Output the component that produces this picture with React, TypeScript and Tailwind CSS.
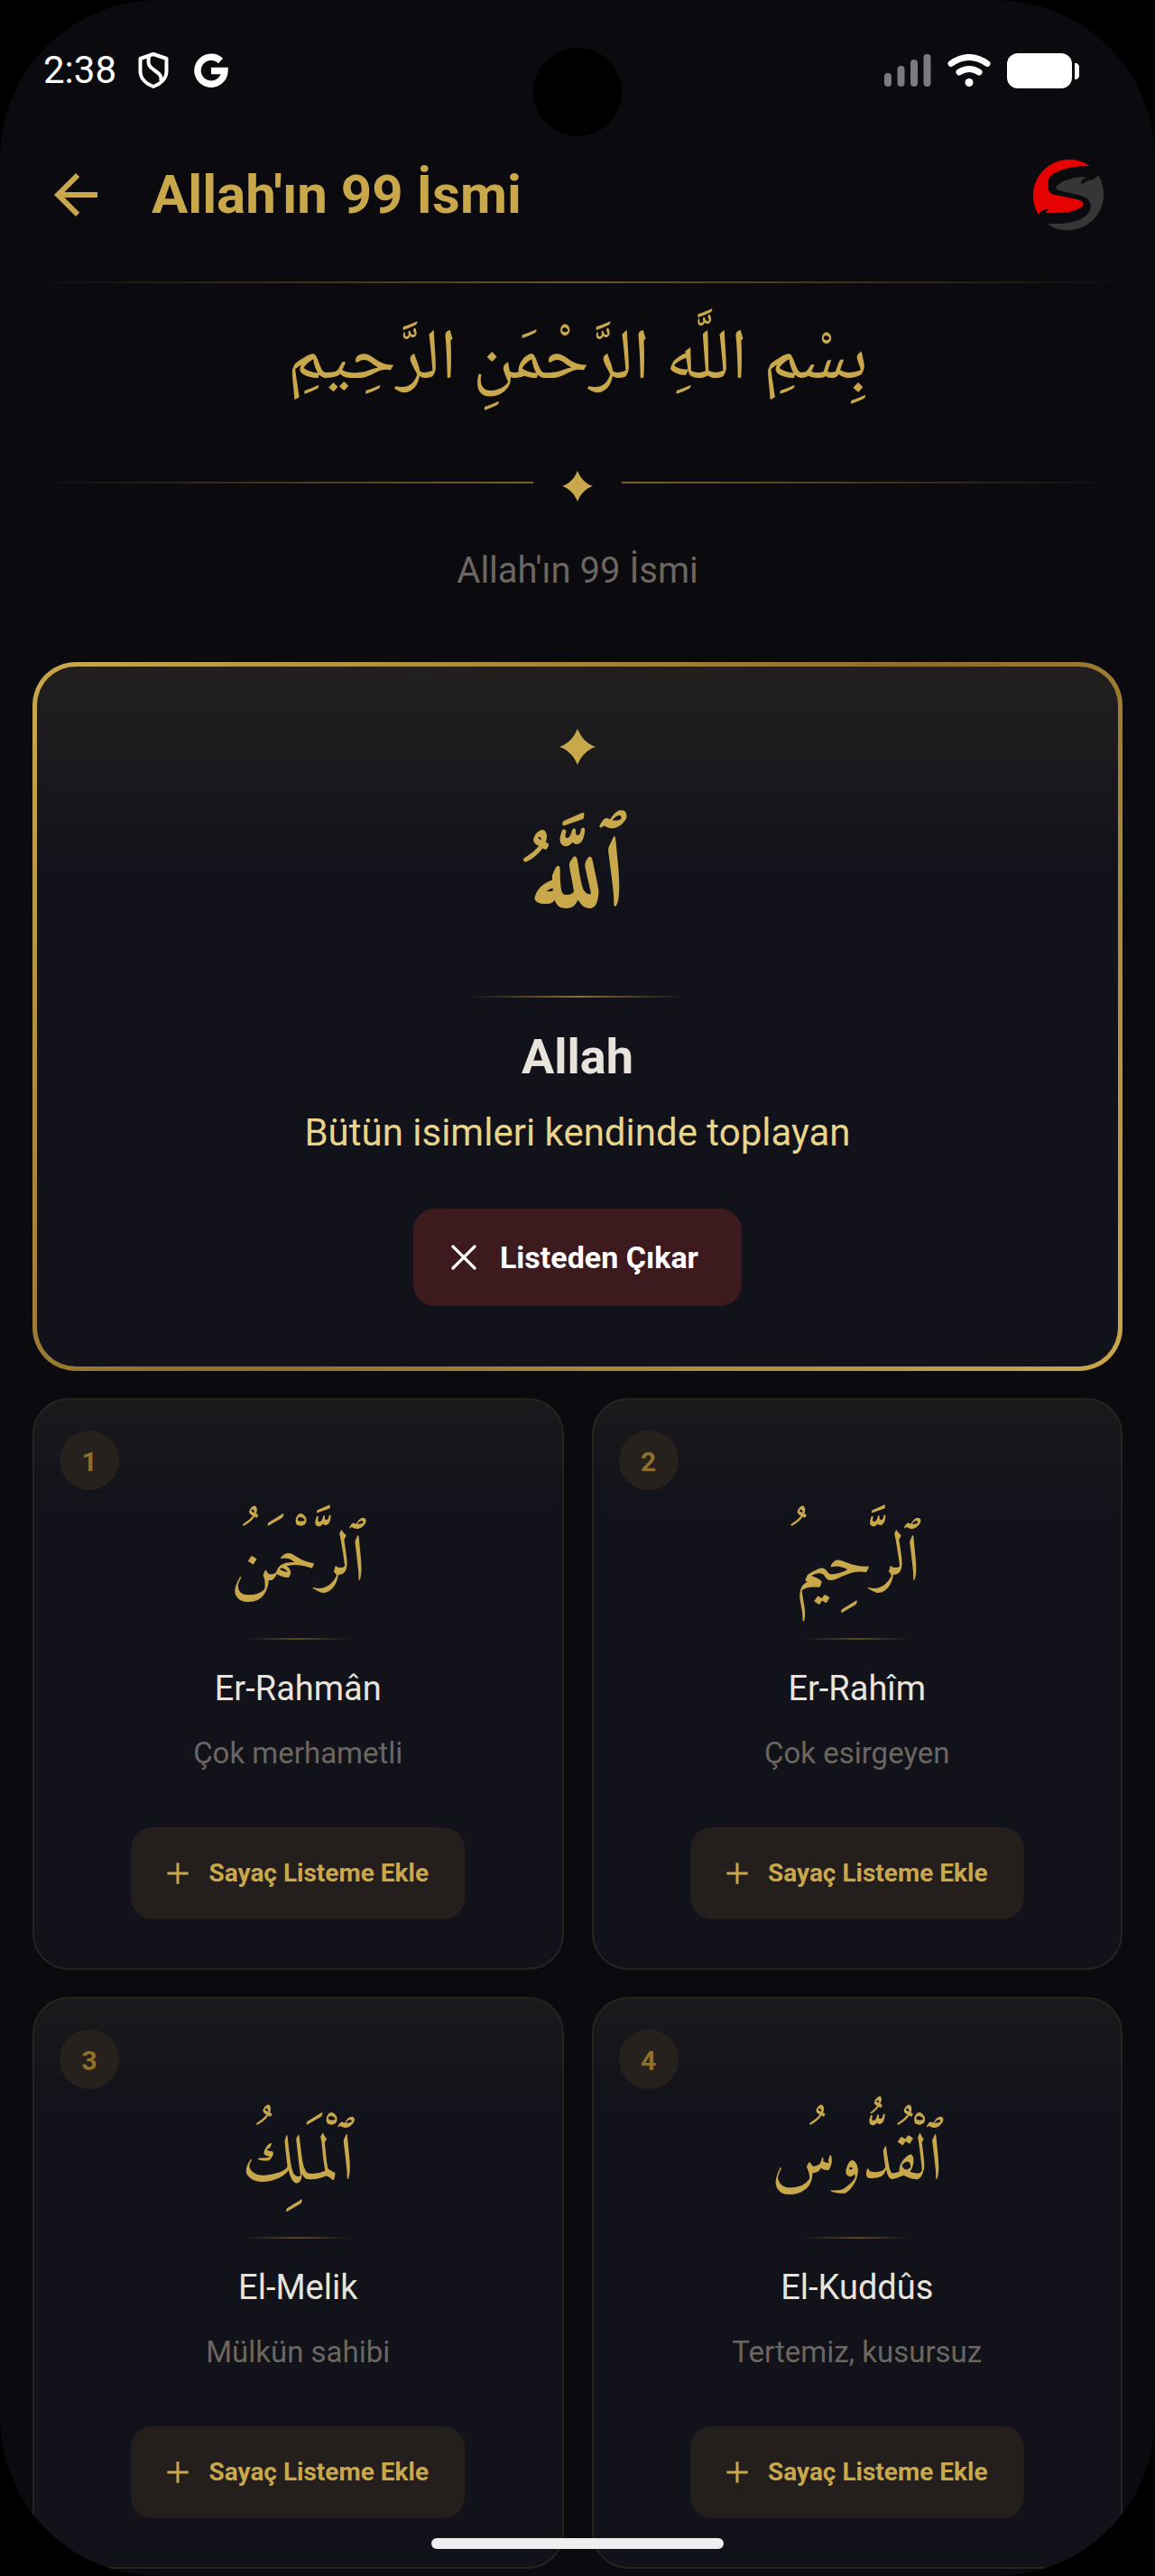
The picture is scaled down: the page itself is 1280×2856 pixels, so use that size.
import React from "react";
import { Plus, X } from "lucide-react";
import { MdArrowBack } from "react-icons/md";

interface DivineName {
  number: number;
  arabic: string;
  name: string;
  meaning: string;
}

const names: DivineName[] = [
  { number: 1, arabic: "ٱلرَّحْمَنُ", name: "Er-Rahmân", meaning: "Çok merhametli" },
  { number: 2, arabic: "ٱلرَّحِيمُ", name: "Er-Rahîm", meaning: "Çok esirgeyen" },
  { number: 3, arabic: "ٱلْمَلِكُ", name: "El-Melik", meaning: "Mülkün sahibi" },
  { number: 4, arabic: "ٱلْقُدُّوسُ", name: "El-Kuddûs", meaning: "Tertemiz, kusursuz" },
];

function Star({ className }: { className: string }) {
  return (
    <svg viewBox="0 0 40 40" className={className} fill="#c9a84c" aria-hidden="true">
      <path d="M20 0C24 10 31 17 40 20C31 23 24 30 20 40C16 30 9 23 0 20C9 17 16 10 20 0Z" />
    </svg>
  );
}

function StatusBar() {
  return (
    <div className="flex h-36 items-center justify-between pt-3 pr-21 pl-12">
      <div className="flex items-center gap-6 text-white">
        <span className="text-[42px] leading-none">2:38</span>
        <svg viewBox="0 0 34 40" className="h-10 w-8.5" fill="none" stroke="white" strokeWidth="4" strokeLinejoin="round" aria-hidden="true">
          <path d="M17 2L31.500 7V21C31.500 29 25 35 17 38C9 35 2.500 29 2.500 21V7Z" />
          <path d="M12 5C10 15 14 17 19 20.500C24 24 27 27 25 32" />
        </svg>
        <svg viewBox="0 0 38 38" className="ml-1 h-9.5 w-9.5" fill="none" stroke="white" strokeWidth="7.500" aria-hidden="true">
          <path d="M29.500 8.500A15 15 0 1 0 34 19.500H19" />
        </svg>
      </div>

      <div className="flex items-center">
        <svg viewBox="0 0 52 36" className="h-9 w-13" fill="#7b7b7f" aria-hidden="true">
          <rect x="0" y="21" width="8" height="15" rx="4" />
          <rect x="14.500" y="13" width="8" height="23" rx="4" />
          <rect x="29" y="6" width="8" height="30" rx="4" />
          <rect x="43.500" y="0" width="8" height="36" rx="4" />
        </svg>
        <svg viewBox="0 0 48 36" className="ml-4.5 h-9 w-12" fill="none" stroke="white" strokeWidth="7" strokeLinecap="round" aria-hidden="true">
          <path d="M4 10.500Q24-3.500 44 10.500" />
          <path d="M13 20Q24 13 35 20" />
          <circle cx="24" cy="31.500" r="4.500" fill="white" stroke="none" />
        </svg>
        <svg viewBox="0 0 80 39" className="ml-4.5 h-[39px] w-20" fill="white" aria-hidden="true">
          <rect width="72" height="39" rx="12" />
          <path d="M75 11C78.500 11 80 13 80 15.500V24.500C80 27 78.500 29 75 29Z" />
        </svg>
      </div>
    </div>
  );
}

function Logo() {
  return (
    <svg viewBox="72 78 240 240" className="h-20 w-20" role="img" aria-label="Logo">
      <path
        fill="#e60000"
        d="M263 102A120 120 0 0 0 92 263Q98 252 110 248Q118 245 126 246Q119 250 117 258C155 260 190 259 216 249C233 242 243 235 242 227C240 218 218 212 196 208C172 203 153 200 140 196C126 191 123 180 125 157C127 142 131 134 145 126C175 110 215 101 263 102Z"
      />
      <path
        fill="#363636"
        d="M291 132A120 120 0 0 1 120 294C150 296 190 293 214 286C245 277 264 261 266 238C267 220 257 209 238 202C212 193 182 190 160 183C151 180 149 176 153 170C163 157 182 149 202 144C218 140 236 138 254 138C245 141 236 148 233 157C236 164 242 161 248 156C262 146 275 150 284 140Q288 137 291 132Z"
      />
    </svg>
  );
}

function FeaturedCard() {
  return (
    <article className="rounded-[48px] bg-linear-135 from-[#c9a84c] via-[#8f6f2a] to-[#c9a84c] p-[5px]">
      <div className="flex flex-col items-center rounded-[43px] bg-[#11121a] bg-linear-to-b from-[#221f1e] to-[#11121a] to-30% pt-[69px] pb-[67px]">
        <Star className="h-10 w-10" />
        <p lang="ar" dir="rtl" className="mt-10 font-['Amiri',serif] text-[110px] leading-[180px] font-bold text-[#c9a84c]">
          ٱللَّهُ
        </p>
        <div className="mt-9 h-0.5 w-60 bg-linear-to-r from-transparent via-[#8a7034] to-transparent" />
        <h2 className="mt-8 text-[54px] leading-[68px] font-bold text-[#e8e4dc]">Allah</h2>
        <p className="mt-6 text-[42px] leading-[52px] text-[#e8d48b]">Bütün isimleri kendinde toplayan</p>
        <button type="button" className="mt-[58px] flex h-27 items-center gap-4 rounded-3xl bg-[#3d1a1d] pr-12 pl-8 text-[34px] font-bold text-white">
          <X className="h-12 w-12" strokeWidth={1.6} />
          Listeden Çıkar
        </button>
      </div>
    </article>
  );
}

function NameCard({ item }: { item: DivineName }) {
  return (
    <article className="relative flex flex-col items-center rounded-[40px] border-2 border-[#27241f] bg-linear-to-b from-[#1a191c] to-[#11121a] to-20% pt-[118px] pb-[54px]">
      <span className="absolute top-[34px] left-7 flex h-16.5 w-16.5 items-center justify-center rounded-full bg-[#26211c] pt-1 text-[30px] leading-none font-bold text-[#8f6f2a]">
        {item.number}
      </span>
      <p lang="ar" dir="rtl" className="font-['Amiri',serif] text-[72px] leading-[130px] text-[#c9a84c]">
        {item.arabic}
      </p>
      <div className="mt-4 h-0.5 w-30 bg-linear-to-r from-transparent via-[#5a4825] to-transparent" />
      <h3 className="mt-[30px] text-[38px] leading-12 text-[#e8e4dc]">{item.name}</h3>
      <p className="mt-[26px] text-[33px] leading-11 text-[#6b665f]">{item.meaning}</p>
      <button type="button" className="mt-15 flex h-[102px] items-center gap-3.5 rounded-3xl bg-[#241e1c] pr-10 pl-8 text-[28px] font-bold text-[#c9a84c]">
        <Plus className="h-10 w-10" strokeWidth={1.8} strokeLinecap="butt" />
        Sayaç Listeme Ekle
      </button>
    </article>
  );
}

export default function App(): React.ReactElement {
  return (
    <div className="bg-black font-['Roboto',sans-serif]">
      <div className="relative min-h-screen overflow-hidden rounded-[176px] bg-[#0a0a0f] pb-2">
        <StatusBar />

        {/* Camera cutout */}
        <div className="absolute top-[53px] left-1/2 h-24.5 w-24.5 -translate-x-1/2 rounded-full bg-black" />

        <header className="flex h-42 items-center pr-14 pb-6 pl-12">
          <button type="button" aria-label="Geri" className="text-[#c9a84c]">
            <MdArrowBack className="h-18 w-18" />
          </button>
          <h1 className="ml-12 flex-1 text-[60px] leading-none font-bold text-[#c9a84c]">Allah'ın 99 İsmi</h1>
          <Logo />
        </header>
        <div className="mx-6 h-0.5 bg-linear-to-r from-transparent via-[#6b572b] to-transparent" />

        <main className="px-9">
          <section className="flex flex-col items-center pt-7">
            <p lang="ar" dir="rtl" className="font-['Noto_Naskh_Arabic',serif] text-[79px] leading-[120px] text-[#c9a84c]">
              بِسْمِ اللَّهِ الرَّحْمَنِ الرَّحِيمِ
            </p>
            <div className="mt-[52px] flex w-full items-center gap-8">
              <div className="h-0.5 flex-1 bg-linear-to-r from-transparent to-[#7a6330]" />
              <Star className="mt-2 h-8.5 w-8.5" />
              <div className="h-0.5 flex-1 bg-linear-to-l from-transparent to-[#7a6330]" />
            </div>
            <p className="mt-[52px] text-[40px] leading-[50px] text-[#6b665f]">Allah'ın 99 İsmi</p>
          </section>

          <section className="mt-19">
            <FeaturedCard />
            <div className="mt-[30px] grid grid-cols-2 gap-x-[31px] gap-y-[30px]">
              {names.map((item) => (
                <NameCard key={item.number} item={item} />
              ))}
            </div>
          </section>
        </main>

        {/* Home indicator */}
        <div className="absolute bottom-[30px] left-1/2 h-3 w-[324px] -translate-x-1/2 rounded-full bg-[#efefef]" />
      </div>
    </div>
  );
}
